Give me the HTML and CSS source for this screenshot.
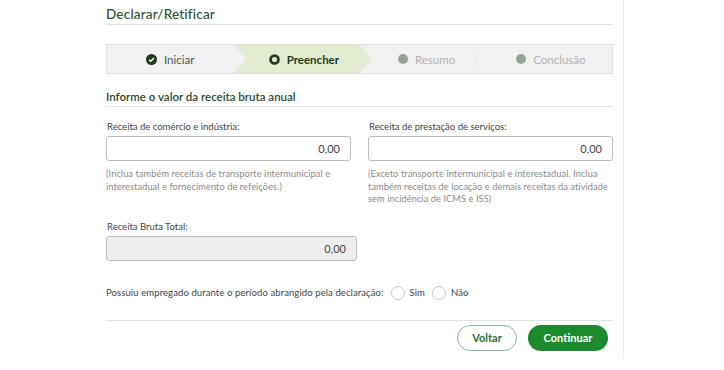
FILE: index.html
```html
<!DOCTYPE html>
<html lang="pt-BR">
<head>
  <meta charset="UTF-8" />
  <title>Declarar/Retificar</title>
  <link rel="stylesheet" href="styles.css">
</head>
<body>
  <div class="page">
    <div class="panel">
      <h1 class="title">Declarar/Retificar</h1>

      <div class="steps">
        <div class="step done">
          <svg class="ico" viewBox="0 0 12 12"><circle cx="6" cy="6" r="6" fill="#1f3a1f"/><path d="M3.3 6.2 5.2 8 8.8 4.3" fill="none" stroke="#fff" stroke-width="1.6"/></svg>
          <span>Iniciar</span>
        </div>
        <div class="step active">
          <svg class="ico" viewBox="0 0 12 12"><circle cx="6" cy="6" r="4.3" fill="none" stroke="#1f3a1f" stroke-width="3"/></svg>
          <span>Preencher</span>
        </div>
        <div class="step todo">
          <span class="dot"></span>
          <span>Resumo</span>
        </div>
        <div class="step todo last">
          <span class="dot"></span>
          <span>Conclusão</span>
        </div>
      </div>

      <h2 class="section">Informe o valor da receita bruta anual</h2>

      <div class="row">
        <div class="field">
          <label>Receita de comércio e indústria:</label>
          <input class="money" type="text" value="0,00">
          <p class="help">(Inclua também receitas de transporte intermunicipal e interestadual e fornecimento de refeições.)</p>
        </div>
        <div class="field">
          <label>Receita de prestação de serviços:</label>
          <input class="money" type="text" value="0,00">
          <p class="help">(Exceto transporte intermunicipal e interestadual. Inclua também receitas de locação e demais receitas da atividade sem incidência de ICMS e ISS)</p>
        </div>
      </div>

      <div class="field total">
        <label>Receita Bruta Total:</label>
        <input class="money" type="text" value="0,00" disabled>
      </div>

      <div class="question">
        <span>Possuiu empregado durante o período abrangido pela declaração:</span>
        <label class="radio"><span class="circle"></span>Sim</label>
        <label class="radio"><span class="circle"></span>Não</label>
      </div>

      <div class="actions">
        <button class="btn outline">Voltar</button>
        <button class="btn primary">Continuar</button>
      </div>
    </div>
  </div>
</body>
</html>
```

FILE: styles.css
```css
body {
  margin: 0;
  background: #fff;
  font-family: "Lato", "Open Sans", sans-serif;
  color: #444;
}
.page {
  width: 624px;
  height: 358px;
  border-right: 1px solid #ececec;
  box-sizing: border-box;
}
.panel {
  margin-left: 106px;
  width: 507px;
  padding-top: 6px;
}
.title {
  margin: 0;
  font-size: 13.5px;
  font-weight: 500;
  color: #2f5232;
  padding-bottom: 2px;
  border-bottom: 1px solid #e2e2e2;
  letter-spacing: 0.2px;
}
.steps {
  margin-top: 19px;
  height: 30px;
  display: grid;
  grid-template-columns: repeat(4, 1fr);
  background: #f1f1f1;
  border: 1px solid #e0e0e0;
  box-sizing: border-box;
  overflow: hidden;
}
.step {
  position: relative;
  display: flex;
  align-items: center;
  justify-content: center;
  gap: 7px;
  padding-left: 8px;
  font-size: 11.5px;
}
.step.done {
  color: #555;
  z-index: 1;
  padding-left: 0;
}
.step.active {
  width: calc(100% + 13px);
  background: #e3ecd1;
  clip-path: polygon(0 0, calc(100% - 13px) 0, 100% 50%, calc(100% - 13px) 100%, 0 100%, 13px 50%);
  font-weight: 700;
  color: #1f3a1f;
  padding-left: 2px;
  box-sizing: border-box;
}
.step.done::after {
  content: "";
  position: absolute;
  right: -13px;
  top: 0;
  border-left: 13px solid #f1f1f1;
  border-top: 14px solid transparent;
  border-bottom: 14px solid transparent;
}
.step.todo {
  color: #b3b3b3;
}
.step.last {
  padding-left: 4px;
}
.step.todo:not(.last)::after {
  content: "";
  position: absolute;
  right: 6px;
  top: 4px;
  width: 18px;
  height: 18px;
  border-top: 1px solid #e6e6e6;
  border-right: 1px solid #e6e6e6;
  transform: scaleX(0.5) rotate(45deg);
}
.ico {
  width: 11px;
  height: 11px;
}
.dot {
  width: 10px;
  height: 10px;
  border-radius: 50%;
  background: #93a593;
}
.section {
  margin: 16px 0 0;
  font-size: 11.5px;
  font-weight: 600;
  color: #2f4a31;
  padding-bottom: 3px;
  border-bottom: 1px solid #e2e2e2;
}
.row {
  display: flex;
  justify-content: space-between;
  margin-top: 14px;
}
.field {
  width: 245px;
  display: flex;
  flex-direction: column;
}
.field label {
  font-size: 9.5px;
  color: #444;
  margin-bottom: 4px;
  margin-left: 1px;
}
.money {
  height: 25px;
  box-sizing: border-box;
  border: 1px solid #bdbdbd;
  border-radius: 3px;
  text-align: right;
  padding: 0 10px;
  font-family: inherit;
  font-size: 11px;
  color: #444;
  background: #fff;
}
.money:disabled {
  background: #eee;
  color: #444;
}
.help {
  margin: 7px 0 0;
  font-size: 9.2px;
  line-height: 12.5px;
  color: #8a8a8a;
  letter-spacing: 0.1px;
}
.field.total {
  width: 251px;
  margin-top: 15px;
}
.question {
  margin-top: 25px;
  display: flex;
  align-items: center;
  font-size: 9.5px;
  color: #444;
  letter-spacing: 0.1px;
}
.radio {
  display: flex;
  align-items: center;
  gap: 5px;
  margin-left: 7px;
}
.circle {
  width: 14px;
  height: 14px;
  border: 1px solid #c9c9c9;
  border-radius: 50%;
  box-sizing: border-box;
  background: #fff;
}
.actions {
  margin-top: 20px;
  border-top: 1px solid #e2e2e2;
  padding-top: 4px;
  padding-right: 5px;
  display: flex;
  justify-content: flex-end;
  gap: 11px;
}
.btn {
  height: 26px;
  border-radius: 13px;
  font-family: inherit;
  font-size: 11px;
  font-weight: 700;
  padding: 0;
}
.btn.outline {
  width: 60px;
  background: #fff;
  color: #2f6e36;
  border: 1px solid #8fb592;
}
.btn.primary {
  width: 80px;
  background: #1d8a2d;
  color: #fff;
  border: none;
}
```
